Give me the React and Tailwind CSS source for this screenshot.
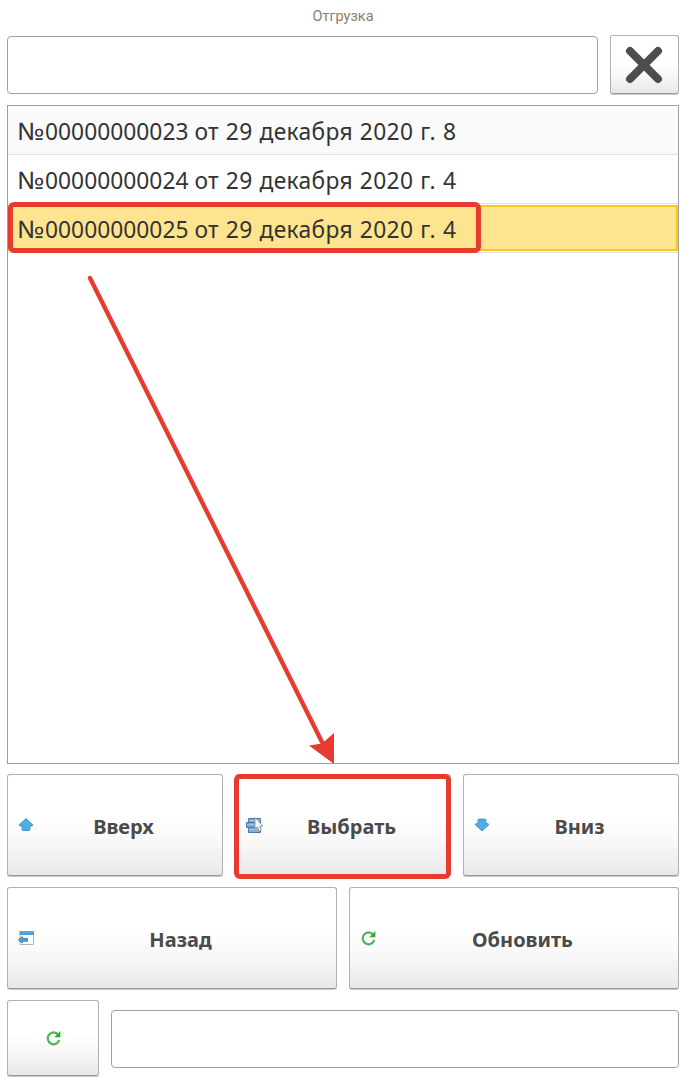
const rows = [
  { id: 1, number: '00000000023', rest: 'от 29 декабря 2020 г. 8', box: 'bg-[#fafafa]' },
  { id: 2, number: '00000000024', rest: 'от 29 декабря 2020 г. 4', box: 'bg-white' },
  { id: 3, number: '00000000025', rest: 'от 29 декабря 2020 г. 4', box: 'bg-white', selected: true },
];

const buttonFace =
  'relative flex items-center justify-center rounded-[3px] border border-[#b0b0b0] border-b-[#999] bg-linear-to-b from-white from-45% via-[#f7f7f7] via-70% to-[#e8e8e8] shadow-[0_1px_0_#c8c8c8]';

function UpIcon() {
  return (
    <svg width="16" height="16" viewBox="0 0 16 16">
      <path d="M8 1.6 14.8 7.9 14.2 8.9H11.9V12.9L11.3 13.5H4.7L4.1 12.9V8.9H1.8L1.2 7.9Z" fill="#4bade9" stroke="#4a93bd" strokeWidth="1" strokeLinejoin="round" />
    </svg>
  );
}

function DownIcon() {
  return (
    <svg width="16" height="16" viewBox="0 0 16 16">
      <path d="M8 14 14.8 7.7 14.2 6.7H11.9V2.7L11.3 2.1H4.7L4.1 2.7V6.7H1.8L1.2 7.7Z" fill="#4bade9" stroke="#4a93bd" strokeWidth="1" strokeLinejoin="round" />
    </svg>
  );
}

function SelectIcon() {
  return (
    <svg width="18" height="17" viewBox="0 0 18 17">
      <path d="M2.5 1.5h12v14h-12z" fill="#7fb0d8" stroke="#4a7aa3" />
      <path d="M.5 5.5h13v5H.5z" fill="#76abd6" stroke="#4a7aa3" />
      <path d="M3 3.5h11M1 7.5h12M3 12.5h11" stroke="#9cc5e4" />
      <path d="M9 .5V12L11.3 10.2 13.2 14 15.4 13 13.7 9.4 16.9 9Z" fill="#fafafa" stroke="#7f8890" strokeWidth=".8" />
    </svg>
  );
}

function BackIcon() {
  return (
    <svg width="17" height="16" viewBox="0 0 17 16">
      <path d="M2 1.5h13.5v13H2z" fill="#fff" stroke="#a9b7c6" />
      <path d="M1.6 1h14.4v4H1.6z" fill="#4a9bdd" />
      <path d="M2 2h13.6" stroke="#6fb3e8" />
      <path d="M.4 9.8 4.3 6.7V8.4H9.4V11.2H4.3V12.9Z" fill="#4aa7e2" stroke="#376f99" strokeWidth=".9" strokeLinejoin="round" />
    </svg>
  );
}

function RefreshIcon() {
  return (
    <svg width="16" height="16" viewBox="0 0 16 16">
      <path d="M13.2 4.6A5.9 5.9 0 1 0 14.3 10" fill="none" stroke="#4fb455" strokeWidth="2.2" />
      <path d="M15.4 1.1V7.3H9.2Z" fill="#35a83b" />
    </svg>
  );
}

function CloseIcon() {
  return (
    <svg className="relative -left-px" width="38" height="38" viewBox="0 0 38 38">
      <path d="M5 5 33 33M33 5 5 33" stroke="#4d4d4d" strokeWidth="8" strokeLinecap="round" />
    </svg>
  );
}

function ActionButton({ icon, label, marked }) {
  return (
    <button className={buttonFace + ' h-[102px] min-w-0 flex-1'}>
      <span className="absolute left-[10px] top-[42px]">{icon}</span>
      <span className="pl-[17px] pt-[2px] text-[20px] leading-[27px] font-bold text-[#4a4a4a] font-['Noto_Sans','Open_Sans',sans-serif]">{label}</span>
      {marked && <span className="absolute -left-[2px] -top-px h-[105px] w-[217px] rounded-[6px] border-[5px] border-[#e63b2e]" />}
    </button>
  );
}

export default function App() {
  return (
    <main className="relative flex h-[1084px] w-[688px] flex-col overflow-hidden bg-white pl-[7px] pr-[9px] font-['Noto_Sans','Open_Sans',sans-serif]">
      <h1 className="flex h-[35px] justify-center pt-[7px] text-[14.5px] leading-[20px] font-normal text-[#8c8068] font-['Roboto',sans-serif]">Отгрузка</h1>

      <div className="flex h-[60px] gap-3">
        <input aria-label="Поиск" className="mt-px h-[58px] w-[591px] rounded-[4px] border border-[#a0a0a0] bg-white px-3 text-2xl outline-none" />
        <button aria-label="Очистить" className={buttonFace + ' h-[59px] w-[69px]'}>
          <CloseIcon />
        </button>
      </div>

      <ul className="mt-[10px] h-[659px] border border-[#a0a0a0] bg-white">
        {rows.map((row) => (
          <li key={row.id} className={row.box + ' relative h-[49px] border-b border-[#e2e2e2]'}>
            <div className={row.selected ? 'flex h-[48px] flex-col justify-center' : 'h-[48px]'}>
              <div className={row.selected ? 'h-[46px] border-2 border-[#fac81e] bg-[#ffe48f] pl-[7px]' : 'pl-[9px] pt-[3px]'}>
                <span className="block origin-left scale-x-[0.95] text-[24px] leading-[43px] whitespace-nowrap text-[#333]">
                  <span className="mr-[5px] inline-block origin-left scale-x-[1.18]">№</span>
                  {row.number} <span className="tracking-[0.36px] [word-spacing:0.6px]">{row.rest}</span>
                </span>
              </div>
            </div>
            {row.selected && <span className="absolute left-0 -top-[2px] h-[51px] w-[473px] rounded-[6px] border-[5px] border-[#e63b2e]" />}
          </li>
        ))}
      </ul>

      <div className="mt-[10px] flex gap-3">
        <ActionButton icon={<UpIcon />} label="Вверх" />
        <ActionButton icon={<SelectIcon />} label="Выбрать" marked />
        <ActionButton icon={<DownIcon />} label="Вниз" />
      </div>

      <div className="mt-[11px] flex gap-3">
        <ActionButton icon={<BackIcon />} label="Назад" />
        <ActionButton icon={<RefreshIcon />} label="Обновить" />
      </div>

      <div className="mt-[11px] flex items-center gap-3">
        <button aria-label="Обновить" className={buttonFace + ' h-[76px] w-[92px]'}>
          <RefreshIcon />
        </button>
        <input aria-label="Сообщение" className="mt-[2px] h-[58px] min-w-0 flex-1 rounded-[4px] border border-[#a0a0a0] bg-white px-3 text-2xl outline-none" />
      </div>

      <svg className="pointer-events-none absolute left-0 top-0" width="688" height="1084" viewBox="0 0 688 1084">
        <path d="M90 278 325 748" stroke="#e63b2e" strokeWidth="4.4" strokeLinecap="round" />
        <path d="M334 764 309 745.5 322 743.5 334 733Z" fill="#e63b2e" />
      </svg>
    </main>
  );
}
